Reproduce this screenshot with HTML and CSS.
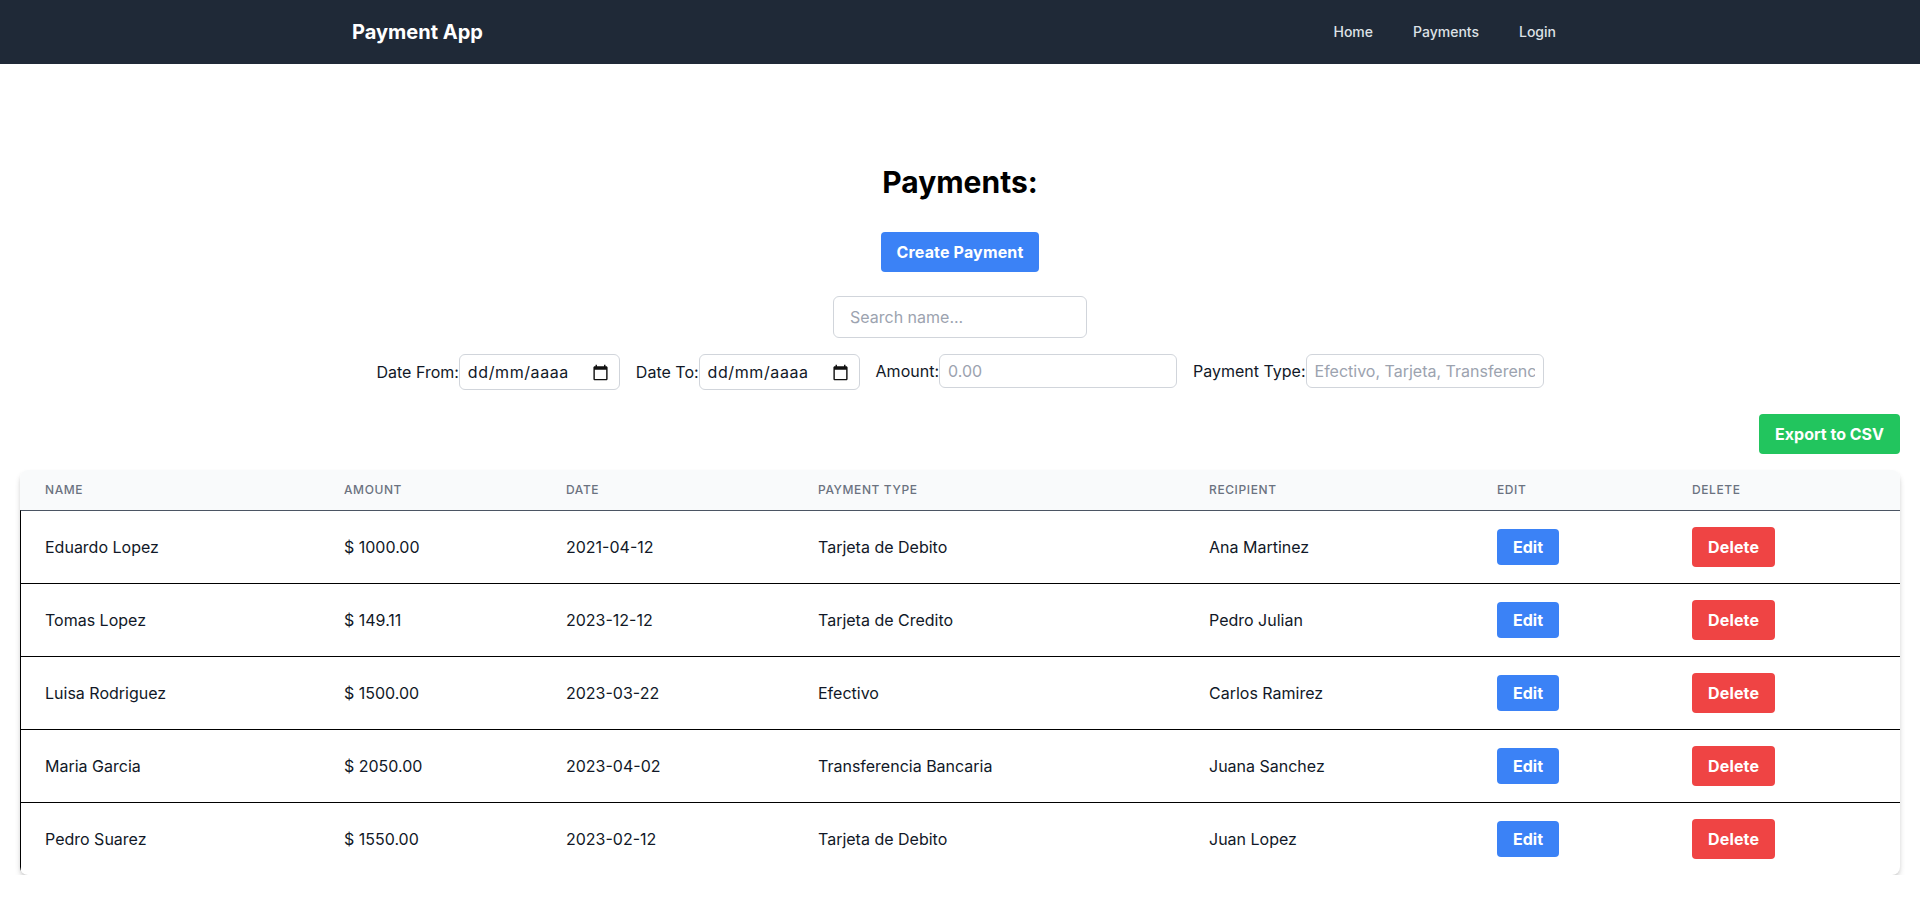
FILE: index.html
```html
<!DOCTYPE html>
<html lang="en">
<head>
    <meta charset="UTF-8">
    <meta name="viewport" content="width=device-width, initial-scale=1.0">
    <title>Payment App</title>
    <link rel="stylesheet" href="styles.css">
</head>
<body>
    <nav class="navbar">
        <div class="navbar-inner">
            <a class="brand" href="#">Payment App</a>
            <div class="nav-links">
                <a class="nav-link" href="#">Home</a>
                <a class="nav-link" href="#">Payments</a>
                <a class="nav-link" href="#">Login</a>
            </div>
        </div>
    </nav>

    <main class="page">
        <h1 class="page-title">Payments:</h1>
        <button class="btn btn-blue btn-create">Create Payment</button>
        <input class="search-input" type="text" placeholder="Search name...">

        <div class="filters">
            <div class="filter">
                <label>Date From:</label>
                <div class="date-field">
                    <span class="date-text">dd/mm/aaaa</span>
                    <svg class="calendar-icon" viewBox="0 0 24 24"><path d="M20 3h-1V1h-2v2H7V1H5v2H4c-1.1 0-2 .9-2 2v16c0 1.1.9 2 2 2h16c1.1 0 2-.9 2-2V5c0-1.1-.9-2-2-2zm0 18H4V8h16v13z"/></svg>
                </div>
            </div>
            <div class="filter">
                <label>Date To:</label>
                <div class="date-field">
                    <span class="date-text">dd/mm/aaaa</span>
                    <svg class="calendar-icon" viewBox="0 0 24 24"><path d="M20 3h-1V1h-2v2H7V1H5v2H4c-1.1 0-2 .9-2 2v16c0 1.1.9 2 2 2h16c1.1 0 2-.9 2-2V5c0-1.1-.9-2-2-2zm0 18H4V8h16v13z"/></svg>
                </div>
            </div>
            <div class="filter">
                <label>Amount:</label>
                <input class="filter-input" type="text" placeholder="0.00">
            </div>
            <div class="filter">
                <label>Payment Type:</label>
                <input class="filter-input" type="text" placeholder="Efectivo, Tarjeta, Transferencia Bancaria">
            </div>
        </div>

        <div class="export-row">
            <button class="btn btn-green">Export to CSV</button>
        </div>

        <div class="table-wrap">
            <table class="payments">
                <colgroup>
                    <col class="col-name">
                    <col class="col-amount">
                    <col class="col-date">
                    <col class="col-type">
                    <col class="col-recipient">
                    <col class="col-edit">
                    <col class="col-delete">
                </colgroup>
                <thead>
                    <tr>
                        <th>Name</th>
                        <th>Amount</th>
                        <th>Date</th>
                        <th>Payment Type</th>
                        <th>Recipient</th>
                        <th>Edit</th>
                        <th>Delete</th>
                    </tr>
                </thead>
                <tbody>
                    <tr>
                        <td>Eduardo Lopez</td>
                        <td>$ 1000.00</td>
                        <td>2021-04-12</td>
                        <td>Tarjeta de Debito</td>
                        <td>Ana Martinez</td>
                        <td><button class="btn btn-blue btn-edit">Edit</button></td>
                        <td><button class="btn btn-red">Delete</button></td>
                    </tr>
                    <tr>
                        <td>Tomas Lopez</td>
                        <td>$ 149.11</td>
                        <td>2023-12-12</td>
                        <td>Tarjeta de Credito</td>
                        <td>Pedro Julian</td>
                        <td><button class="btn btn-blue btn-edit">Edit</button></td>
                        <td><button class="btn btn-red">Delete</button></td>
                    </tr>
                    <tr>
                        <td>Luisa Rodriguez</td>
                        <td>$ 1500.00</td>
                        <td>2023-03-22</td>
                        <td>Efectivo</td>
                        <td>Carlos Ramirez</td>
                        <td><button class="btn btn-blue btn-edit">Edit</button></td>
                        <td><button class="btn btn-red">Delete</button></td>
                    </tr>
                    <tr>
                        <td>Maria Garcia</td>
                        <td>$ 2050.00</td>
                        <td>2023-04-02</td>
                        <td>Transferencia Bancaria</td>
                        <td>Juana Sanchez</td>
                        <td><button class="btn btn-blue btn-edit">Edit</button></td>
                        <td><button class="btn btn-red">Delete</button></td>
                    </tr>
                    <tr>
                        <td>Pedro Suarez</td>
                        <td>$ 1550.00</td>
                        <td>2023-02-12</td>
                        <td>Tarjeta de Debito</td>
                        <td>Juan Lopez</td>
                        <td><button class="btn btn-blue btn-edit">Edit</button></td>
                        <td><button class="btn btn-red">Delete</button></td>
                    </tr>
                </tbody>
            </table>
        </div>
    </main>
</body>
</html>
```

FILE: styles.css
```css
* {
    margin: 0;
    padding: 0;
    box-sizing: border-box;
}

body {
    font-family: Inter, "Noto Sans", sans-serif;
    font-size: 16px;
    line-height: 24px;
    color: #000;
    background-color: #fff;
    overflow: hidden;
}

/* Navbar */
.navbar {
    height: 64px;
    background-color: #1f2937;
}

.navbar-inner {
    width: 1280px;
    height: 100%;
    margin: 0 auto;
    padding: 0 32px;
    display: flex;
    align-items: center;
    justify-content: space-between;
}

.brand {
    font-size: 20px;
    line-height: 28px;
    font-weight: 700;
    color: #fff;
    text-decoration: none;
}

.nav-links {
    display: flex;
    gap: 16px;
}

.nav-link {
    padding: 8px 12px;
    font-size: 14px;
    line-height: 20px;
    font-weight: 500;
    color: #dde1e6;
    text-decoration: none;
}

/* Main */
.page {
    padding: 100px 20px 0;
    display: flex;
    flex-direction: column;
    align-items: center;
}

.page-title {
    font-size: 30px;
    line-height: 36px;
    font-weight: 700;
    margin-bottom: 32px;
}

.btn {
    display: block;
    border: none;
    border-radius: 4px;
    padding: 8px 16px;
    font-family: inherit;
    font-size: 16px;
    line-height: 24px;
    font-weight: 700;
    letter-spacing: 0.01em;
    color: #fff;
    cursor: pointer;
}

.btn-blue {
    background-color: #3b82f6;
}

.btn-green {
    background-color: #22c55e;
    letter-spacing: 0;
}

.btn-red {
    background-color: #ef4444;
}

.btn-edit {
    padding: 6px 16px;
    letter-spacing: 0;
}

.btn-create {
    margin-bottom: 24px;
}

.search-input {
    width: 254px;
    height: 42px;
    padding: 0 16px;
    border: 1px solid #d1d5db;
    border-radius: 6px;
    font-family: inherit;
    font-size: 16px;
    margin-bottom: 16px;
}

input::placeholder {
    color: #9ca3af;
    opacity: 1;
}

/* Filters */
.filters {
    display: flex;
    align-items: flex-start;
    justify-content: center;
    gap: 16px;
    margin-bottom: 24px;
    color: #111827;
}

.filter {
    display: flex;
    align-items: center;
}

.date-field {
    width: 161px;
    height: 36px;
    padding: 0 10px 0 8px;
    border: 1px solid #d1d5db;
    border-radius: 6px;
    display: flex;
    align-items: center;
    justify-content: space-between;
}

.date-text {
    letter-spacing: 0.6px;
}

.calendar-icon {
    width: 17px;
    height: 17px;
    fill: #111;
}

.filter-input {
    width: 238px;
    height: 34px;
    padding: 0 8px;
    border: 1px solid #d1d5db;
    border-radius: 6px;
    font-family: inherit;
    font-size: 16px;
}

.export-row {
    align-self: stretch;
    display: flex;
    justify-content: flex-end;
    margin-bottom: 16px;
}

/* Table */
.table-wrap {
    align-self: stretch;
    border-radius: 8px;
    overflow: hidden;
    box-shadow: 0 4px 6px -1px rgba(0, 0, 0, 0.2), 0 2px 4px -2px rgba(0, 0, 0, 0.15);
}

.payments {
    width: 100%;
    table-layout: fixed;
    border-collapse: separate;
    border-spacing: 0;
}

.col-name { width: 300px; }
.col-amount { width: 222px; }
.col-date { width: 252px; }
.col-type { width: 391px; }
.col-recipient { width: 288px; }
.col-edit { width: 195px; }
.col-delete { width: 232px; }

.payments th {
    height: 40px;
    padding: 0 24px;
    background-color: #f9fafb;
    font-size: 12px;
    line-height: 16px;
    font-weight: 500;
    letter-spacing: 0.05em;
    text-align: left;
    text-transform: uppercase;
    color: #6b7280;
}

.payments th:first-child {
    padding-left: 25px;
}

.payments td {
    height: 73px;
    padding: 0 24px;
    border-top: 1px solid #000;
    vertical-align: middle;
    color: #111827;
}

.payments tbody tr:first-child td {
    border-top-color: #4b5563;
}

.payments td:first-child {
    border-left: 1px solid #000;
}
```
